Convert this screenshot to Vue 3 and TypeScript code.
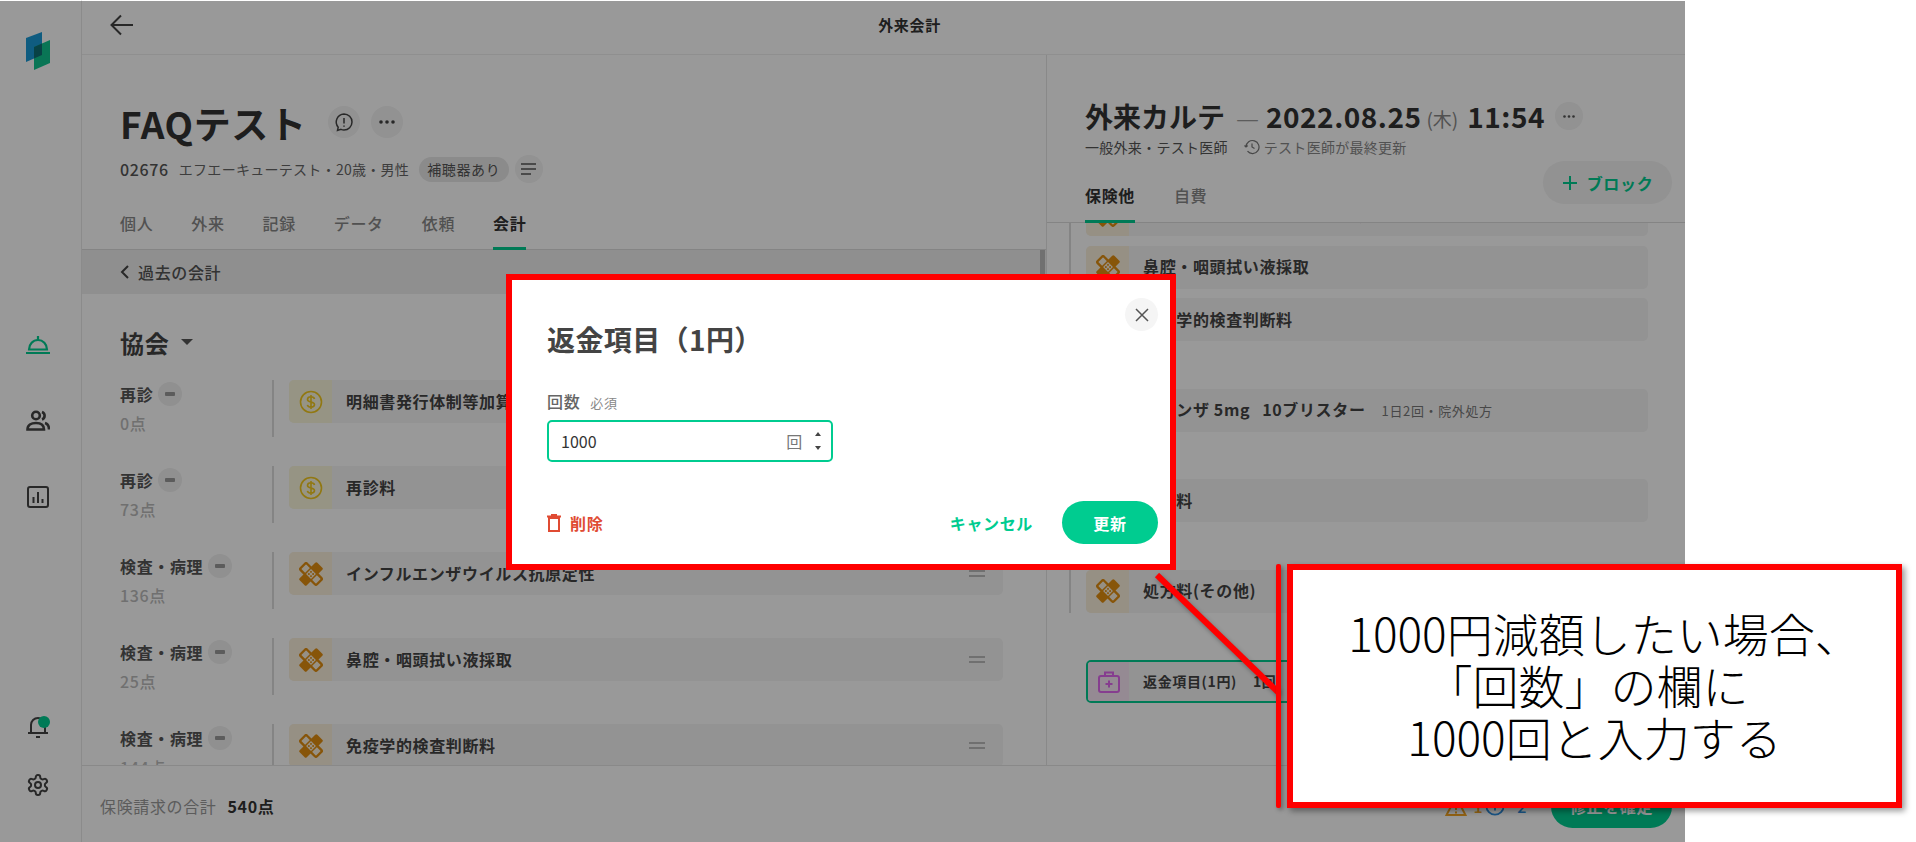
<script setup lang="ts">
type Row = { label: string; points: string; title: string; kind: "dollar" | "bandage" };
type ChartItem = { title: string; extra?: string; note?: string };

const tabs = ["個人", "外来", "記録", "データ", "依頼", "会計"];

const rows: Row[] = [
  { label: "再診", points: "0点", title: "明細書発行体制等加算", kind: "dollar" },
  { label: "再診", points: "73点", title: "再診料", kind: "dollar" },
  { label: "検査・病理", points: "136点", title: "インフルエンザウイルス抗原定性", kind: "bandage" },
  { label: "検査・病理", points: "25点", title: "鼻腔・咽頭拭い液採取", kind: "bandage" },
  { label: "検査・病理", points: "144点", title: "免疫学的検査判断料", kind: "bandage" },
];

const chartGroups: ChartItem[][] = [
  [{ title: "インフルエンザウイルス抗原定性" }, { title: "鼻腔・咽頭拭い液採取" }, { title: "免疫学的検査判断料" }],
  [{ title: "リレンザ 5mg", extra: "10ブリスター", note: "1日2回・院外処方" }],
  [{ title: "調剤料" }],
  [{ title: "処方料(その他)" }],
];
</script>

<template>
  <div class="screen">
    <div class="app">
      <aside class="sidebar">
        <svg class="logo" width="24" height="38" viewBox="0 0 24 38">
          <polygon points="0,6 16,0 16,23 0,30" fill="#1a9ad6" />
          <polygon points="8,15 24,8 24,31 8,38" fill="#10c48e" />
          <polygon points="8,15 16,11.5 16,23 8,26.5" fill="#0e6f73" />
        </svg>
        <nav class="nav">
          <svg width="24" height="24" viewBox="0 0 24 24" fill="none" stroke="#00cc90" stroke-width="2.200">
            <path d="M3 16.500a9 9.500 0 0 1 18 0z" />
            <path d="M12 3v4M0 20h24" />
          </svg>
          <svg width="24" height="24" viewBox="0 0 24 24" fill="none" stroke="#444" stroke-width="2.600">
            <circle cx="10" cy="6.500" r="3.800" />
            <path d="M1.500 20.500c0-4.500 3.500-6.500 8.500-6.500s8 2 8 6.500z" />
            <path d="M16 3a4 4 0 0 1 0 7.500M19 14c2.500.8 4 2.800 4 6.500" />
          </svg>
          <svg width="24" height="24" viewBox="0 0 24 24" fill="none" stroke="#444" stroke-width="2">
            <rect x="2" y="2" width="20" height="20" rx="2" />
            <path d="M7.500 12v6M12 7v11M16.500 14v4" />
          </svg>
        </nav>
        <div class="nav-bottom">
          <div class="bell">
            <svg width="24" height="24" viewBox="0 0 24 24" fill="none" stroke="#444" stroke-width="2">
              <path d="M5 18V10a7 7 0 0 1 14 0v8zM2 18h20M10 22h4" />
            </svg>
            <span class="bell-dot"></span>
          </div>
          <svg width="24" height="24" viewBox="0 0 24 24" fill="none" stroke="#444" stroke-width="2">
            <path d="M12.220 2h-.44a2 2 0 0 0-2 2v.18a2 2 0 0 1-1 1.730l-.43.25a2 2 0 0 1-2 0l-.15-.08a2 2 0 0 0-2.730.73l-.22.38a2 2 0 0 0 .73 2.730l.15.1a2 2 0 0 1 1 1.720v.51a2 2 0 0 1-1 1.740l-.15.09a2 2 0 0 0-.73 2.730l.22.38a2 2 0 0 0 2.730.73l.15-.08a2 2 0 0 1 2 0l.43.25a2 2 0 0 1 1 1.730V20a2 2 0 0 0 2 2h.44a2 2 0 0 0 2-2v-.18a2 2 0 0 1 1-1.730l.43-.25a2 2 0 0 1 2 0l.15.08a2 2 0 0 0 2.730-.73l.22-.39a2 2 0 0 0-.73-2.730l-.15-.08a2 2 0 0 1-1-1.740v-.5a2 2 0 0 1 1-1.740l.15-.09a2 2 0 0 0 .73-2.730l-.22-.38a2 2 0 0 0-2.730-.73l-.15.08a2 2 0 0 1-2 0l-.43-.25a2 2 0 0 1-1-1.730V4a2 2 0 0 0-2-2z" />
            <circle cx="12" cy="12" r="3" />
          </svg>
        </div>
      </aside>

      <div class="main">
        <header class="topbar">
          <svg class="back" width="24" height="24" viewBox="0 0 24 24" fill="none" stroke="#444" stroke-width="2">
            <path d="M23 12H2M11 2.500 1.500 12l9.500 9.500" />
          </svg>
          <span class="topbar-title">外来会計</span>
        </header>

        <div class="panels">
          <section class="left">
            <div class="patient">
              <div class="name-row">
                <h1>FAQテスト</h1>
                <span class="round-btn">
                  <svg width="20" height="20" viewBox="0 0 20 20" fill="none" stroke="#444" stroke-width="1.500">
                    <path d="M10 2a8 8 0 0 1 0 16c-1 0-2-.2-3-.6L3.500 18.500l.7-3.300A8 8 0 0 1 10 2zM10 6v5.500M10 13.500v1.200" />
                  </svg>
                </span>
                <span class="round-btn">
                  <svg width="16" height="4" viewBox="0 0 16 4" fill="#444">
                    <circle cx="2" cy="2" r="1.800" /><circle cx="8" cy="2" r="1.800" /><circle cx="14" cy="2" r="1.800" />
                  </svg>
                </span>
              </div>
              <div class="info-row">
                <b class="pid">02676</b>
                <span class="kana">エフエーキューテスト・20歳・男性</span>
                <span class="pill">補聴器あり</span>
                <span class="menu-btn">
                  <svg width="16" height="12" viewBox="0 0 16 12" fill="none" stroke="#555" stroke-width="1.500">
                    <path d="M0 1h15M0 6h15M0 11h10" />
                  </svg>
                </span>
              </div>
              <div class="tabs">
                <span v-for="tab in tabs" :key="tab" class="tab" :class="{ active: tab === '会計' }">{{ tab }}</span>
              </div>
            </div>

            <div class="past-bar">
              <svg width="10" height="14" viewBox="0 0 10 14" fill="none" stroke="#444" stroke-width="2">
                <path d="M8 1 2 7l6 6" />
              </svg>
              <span>過去の会計</span>
            </div>

            <div class="insurer">
              <span>協会</span>
              <i class="caret"></i>
            </div>

            <div class="rows">
              <div v-for="(row, i) in rows" :key="i" class="row">
                <div class="row-label">
                  <div class="row-name">
                    <b>{{ row.label }}</b>
                    <span class="minus"><i></i></span>
                  </div>
                  <div class="row-points">{{ row.points }}</div>
                </div>
                <div class="card">
                  <div class="card-icon" :class="row.kind">
                    <svg v-if="row.kind === 'dollar'" width="24" height="24" viewBox="0 0 24 24" fill="none" stroke="#f2c81e" stroke-width="1.600">
                      <circle cx="12" cy="12" r="10.500" />
                      <path d="M15.500 9c-.3-1.500-1.700-2.200-3.500-2.200-2 0-3.500 1-3.500 2.600 0 3.600 7 1.600 7 5.200 0 1.600-1.500 2.600-3.500 2.600-1.900 0-3.300-.8-3.600-2.300M12 5v14" />
                    </svg>
                    <svg v-else width="24" height="24" viewBox="0 0 24 24">
                      <g transform="rotate(45 12 12)">
                        <rect x="0.500" y="7.500" width="23" height="9" rx="1.500" fill="#faf0dc" stroke="#e28e10" stroke-width="2.400" />
                        <rect x="7" y="-0.500" width="10" height="25" rx="1.500" fill="#e28e10" />
                        <rect x="8.500" y="8.500" width="7" height="7" fill="#faf0dc" />
                        <circle cx="10.500" cy="10.500" r="1" fill="#e28e10" /><circle cx="13.500" cy="10.500" r="1" fill="#e28e10" />
                        <circle cx="10.500" cy="13.500" r="1" fill="#e28e10" /><circle cx="13.500" cy="13.500" r="1" fill="#e28e10" />
                      </g>
                    </svg>
                  </div>
                  <span class="card-title">{{ row.title }}</span>
                  <span class="handle"></span>
                </div>
              </div>
            </div>

            <span class="scroll-thumb"></span>
          </section>

          <section class="right">
            <div class="chart-head">
              <div class="chart-title">
                <b>外来カルテ</b>
                <span class="dash">—</span>
                <b class="num">2022.08.25</b>
                <span class="weekday">(木)</span>
                <b class="num">11:54</b>
                <span class="small-dots">
                  <svg width="12" height="3" viewBox="0 0 12 3" fill="#555">
                    <circle cx="1.500" cy="1.500" r="1.300" /><circle cx="6" cy="1.500" r="1.300" /><circle cx="10.500" cy="1.500" r="1.300" />
                  </svg>
                </span>
              </div>
              <div class="chart-sub">
                <span class="sub-strong">一般外来・テスト医師</span>
                <svg width="16" height="16" viewBox="0 0 16 16" fill="none" stroke="#777" stroke-width="1.200">
                  <path d="M2 8a6.500 6.500 0 1 1 1.500 4.200M.5 6.500 2 8l1.800-1.400M8 4.500V8l2.500 1.500" />
                </svg>
                <span>テスト医師が最終更新</span>
              </div>
              <div class="chart-tabs">
                <span class="chart-tab active">保険他</span>
                <span class="chart-tab">自費</span>
              </div>
              <span class="block-btn">
                <svg width="16" height="16" viewBox="0 0 16 16" fill="none" stroke="#00cc90" stroke-width="2">
                  <path d="M8 1v14M1 8h14" />
                </svg>
                ブロック
              </span>
            </div>

            <div class="chart-list">
              <div v-for="(group, g) in chartGroups" :key="g" class="chart-group">
                <div v-for="item in group" :key="item.title" class="card">
                  <div class="card-icon bandage">
                    <svg width="24" height="24" viewBox="0 0 24 24">
                      <g transform="rotate(45 12 12)">
                        <rect x="0.500" y="7.500" width="23" height="9" rx="1.500" fill="#faf0dc" stroke="#e28e10" stroke-width="2.400" />
                        <rect x="7" y="-0.500" width="10" height="25" rx="1.500" fill="#e28e10" />
                        <rect x="8.500" y="8.500" width="7" height="7" fill="#faf0dc" />
                        <circle cx="10.500" cy="10.500" r="1" fill="#e28e10" /><circle cx="13.500" cy="10.500" r="1" fill="#e28e10" />
                        <circle cx="10.500" cy="13.500" r="1" fill="#e28e10" /><circle cx="13.500" cy="13.500" r="1" fill="#e28e10" />
                      </g>
                    </svg>
                  </div>
                  <span class="card-title">{{ item.title }}</span>
                  <span v-if="item.extra" class="card-title">{{ item.extra }}</span>
                  <span v-if="item.note" class="card-note">{{ item.note }}</span>
                </div>
              </div>
              <div class="chart-group plain">
                <div class="card refund">
                  <div class="card-icon pink">
                    <svg width="22" height="22" viewBox="0 0 22 22" fill="none" stroke="#e066ee" stroke-width="2">
                      <rect x="1" y="5" width="20" height="16" rx="2" />
                      <path d="M7 5V1.500h8V5M11 9.500v7M7.500 13h7" />
                    </svg>
                  </div>
                  <span class="card-title refund-title">返金項目(1円)</span>
                  <span class="card-title refund-title">1回</span>
                </div>
              </div>
            </div>
          </section>
        </div>

        <footer class="footer">
          <span class="total-label">保険請求の合計</span>
          <b class="total-value">540点</b>
          <div class="footer-right">
            <svg width="22" height="22" viewBox="0 0 22 22" fill="none" stroke="#f5a623" stroke-width="2">
              <path d="M11 2 1.500 20h19zM11 8v7M11 16.500v2" />
            </svg>
            <span class="warn-count">1</span>
            <svg width="20" height="20" viewBox="0 0 22 22" fill="none" stroke="#2d8fe0" stroke-width="2">
              <circle cx="11" cy="11" r="9.500" />
              <path d="M11 10v6M11 6v2" />
            </svg>
            <span class="info-count">2</span>
            <span class="confirm-btn">修正を確定</span>
          </div>
        </footer>
      </div>

      <div class="scrim"></div>
    </div>

    <div class="modal">
      <button class="close">
        <svg width="14" height="14" viewBox="0 0 14 14" fill="none" stroke="#555" stroke-width="1.500">
          <path d="M1 1l12 12M13 1 1 13" />
        </svg>
      </button>
      <h2>返金項目（1円）</h2>
      <div class="field-label"><b>回数</b><span>必須</span></div>
      <div class="field">
        <input value="1000" />
        <span class="unit">回</span>
        <span class="stepper"><i class="up"></i><i class="down"></i></span>
      </div>
      <div class="actions">
        <span class="delete">
          <svg width="14" height="18" viewBox="0 0 14 18" fill="none" stroke="#e04b33" stroke-width="2">
            <path d="M2 4h10v13H2zM0 2.500h14M4 1h6" />
          </svg>
          削除
        </span>
        <span class="cancel">キャンセル</span>
        <span class="update">更新</span>
      </div>
    </div>

    <svg class="arrow" width="140" height="130" viewBox="0 0 140 130">
      <path d="M3 3 125 121" stroke="#ff0000" stroke-width="6" fill="none" />
    </svg>
    <span class="callout-line"></span>
    <div class="callout">
      <p class="line-a">1000円減額したい場合、</p>
      <p class="line-b">「回数」の欄に</p>
      <p>1000回と入力する</p>
    </div>
  </div>
</template>

<style>
html,
body {
  margin: 0;
  background: #fff;
}
</style>

<style scoped>
.screen {
  position: relative;
  width: 1916px;
  height: 842px;
  overflow: hidden;
  background: #fff;
  font-family: "Noto Sans CJK JP", "Noto Sans", sans-serif;
  color: #333;
  letter-spacing: 0.04em;
}

.app {
  position: relative;
  display: flex;
  width: 1685px;
  height: 842px;
  background: #fff;
}

.scrim {
  position: absolute;
  z-index: 5;
  inset: 1px 0 0 0;
  background: rgba(0, 0, 0, 0.4);
}

.sidebar {
  display: flex;
  flex-direction: column;
  align-items: center;
  box-sizing: border-box;
  width: 82px;
  height: 842px;
  padding: 32px 5px 45px 0;
  border-right: 1px solid #e8e8e8;
}

.logo {
  flex: none;
}

.nav {
  display: flex;
  flex-direction: column;
  gap: 52px;
  margin-top: 263px;
}

.nav-bottom {
  display: flex;
  flex-direction: column;
  gap: 34px;
  margin-top: auto;
}

.nav svg,
.nav-bottom svg {
  display: block;
}

.bell {
  position: relative;
}

.bell-dot {
  position: absolute;
  top: 1px;
  right: 0;
  width: 12px;
  height: 12px;
  border-radius: 50%;
  background: #00cc90;
}

.main {
  display: flex;
  flex-direction: column;
  flex: 1;
  min-width: 0;
}

.topbar {
  position: relative;
  display: flex;
  align-items: center;
  justify-content: center;
  flex: none;
  height: 55px;
  border-bottom: 1px solid #eee;
  box-sizing: border-box;
}

.back {
  position: absolute;
  left: 28px;
  top: 13px;
}

.topbar-title {
  font-size: 15px;
  font-weight: 700;
  margin-left: 52px;
  margin-bottom: 5px;
}

.panels {
  display: flex;
  flex: 1;
  min-height: 0;
}

.left {
  position: relative;
  width: 965px;
  flex: none;
  overflow: hidden;
  border-right: 1px solid #e4e4e4;
  box-sizing: border-box;
}

.patient {
  padding: 48px 0 0 38px;
  border-bottom: 1px solid #ddd;
}

.name-row {
  display: flex;
  align-items: center;
  height: 40px;
}

h1 {
  margin: 0 21px 0 0;
  font-size: 37px;
  line-height: 40px;
  font-weight: 700;
}

.round-btn {
  display: flex;
  align-items: center;
  justify-content: center;
  width: 32px;
  height: 32px;
  margin-right: 11px;
  border-radius: 50%;
  background: #f3f3f3;
  margin-top: -2px;
}

.info-row {
  display: flex;
  align-items: center;
  height: 26px;
  margin-top: 13px;
}

.pid {
  font-size: 16px;
  font-weight: 500;
  color: #555;
  margin-right: 10px;
}

.kana {
  font-size: 14px;
  color: #666;
  width: 240px;
  letter-spacing: 0.02em;
}

.pill {
  display: inline-flex;
  align-items: center;
  justify-content: center;
  width: 90px;
  height: 25px;
  border-radius: 13px;
  background: #e8e8e8;
  font-size: 14px;
  color: #555;
}

.menu-btn {
  display: flex;
  align-items: center;
  justify-content: center;
  width: 28px;
  height: 28px;
  margin-left: 6px;
  border-radius: 50%;
  background: #f3f3f3;
}

.tabs {
  display: flex;
  gap: 38px;
  height: 38px;
  padding-top: 29px;
}

.tab {
  position: relative;
  height: 24px;
  font-size: 16px;
  line-height: 24px;
  font-weight: 500;
  color: #888;
}

.tab.active {
  color: #333;
  font-weight: 700;
}

.tab.active::after {
  content: "";
  position: absolute;
  left: 0;
  right: 0;
  top: 36px;
  height: 3px;
  background: #00cc90;
}

.past-bar {
  display: flex;
  align-items: center;
  gap: 8px;
  height: 44px;
  padding-left: 38px;
  background: #eee;
  font-size: 16px;
  font-weight: 500;
  color: #555;
}

.insurer {
  display: flex;
  align-items: center;
  gap: 12px;
  height: 34px;
  margin: 31px 0 21px 38px;
  font-size: 24px;
  font-weight: 700;
  color: #444;
}

.caret {
  width: 0;
  height: 0;
  border-left: 6px solid transparent;
  border-right: 6px solid transparent;
  border-top: 6px solid #555;
}

.rows {
  display: flex;
  flex-direction: column;
  gap: 29px;
  padding-left: 38px;
}

.row {
  display: flex;
  flex: none;
  height: 57px;
}

.row-label {
  box-sizing: border-box;
  width: 154px;
  border-right: 2px solid #ddd;
  flex: none;
}

.row-name {
  display: flex;
  align-items: center;
  gap: 5px;
  height: 28px;
  font-size: 16px;
  color: #555;
}

.row-name b {
  font-weight: 700;
}

.minus {
  display: flex;
  align-items: center;
  justify-content: center;
  width: 24px;
  height: 24px;
  border-radius: 50%;
  background: #f0f0f0;
}

.minus i {
  width: 10px;
  height: 4px;
  border-radius: 1px;
  background: #999;
}

.row-points {
  margin-top: 3px;
  font-size: 16px;
  line-height: 24px;
  color: #bbb;
  font-weight: 500;
}

.card {
  display: flex;
  align-items: center;
  position: relative;
  box-sizing: border-box;
  width: 714px;
  height: 43px;
  margin-left: 15px;
  border-radius: 5px;
  background: #f5f5f5;
  overflow: hidden;
  flex: none;
}

.card-icon {
  display: flex;
  align-items: center;
  justify-content: center;
  flex: none;
  width: 43px;
  height: 100%;
  margin-right: 14px;
}

.card-icon.dollar {
  background: #fbf7dc;
}

.card-icon.bandage {
  background: #faf0dc;
}

.card-icon.pink {
  background: #f8e6f6;
}

.card-title {
  font-size: 16px;
  font-weight: 700;
  color: #444;
  white-space: nowrap;
  margin-right: 12px;
  margin-top: -2px;
}

.card-note {
  font-size: 13px;
  color: #777;
  margin-left: 4px;
}

.handle {
  position: absolute;
  right: 18px;
  top: 18px;
  width: 16px;
  height: 7px;
  border-top: 2px solid #bbb;
  border-bottom: 2px solid #bbb;
  box-sizing: border-box;
}

.scroll-thumb {
  position: absolute;
  right: 1px;
  top: 195px;
  width: 5px;
  height: 40px;
  background: #bbb;
}

.right {
  position: relative;
  flex: 1;
  min-width: 0;
  display: flex;
  flex-direction: column;
  overflow: hidden;
}

.chart-head {
  flex: none;
  box-sizing: border-box;
  height: 168px;
  padding: 44px 0 0 38px;
  border-bottom: 1px solid #ddd;
  position: relative;
  z-index: 1;
  background: #fff;
}

.chart-title {
  display: flex;
  align-items: center;
  height: 34px;
  font-size: 28px;
  color: #333;
  white-space: nowrap;
  letter-spacing: 0;
}

.chart-title b {
  font-weight: 700;
}

.chart-title .num {
  letter-spacing: 0.5px;
}

.dash {
  margin: 0 7px 0 11px;
  font-size: 26px;
  font-weight: 300;
  color: #999;
}

.weekday {
  margin: 4px 9px 0 5px;
  font-size: 19px;
  color: #888;
}

.small-dots {
  display: flex;
  align-items: center;
  justify-content: center;
  width: 28px;
  height: 28px;
  margin-left: 10px;
  border-radius: 50%;
  background: #f3f3f3;
}

.chart-sub {
  display: flex;
  align-items: center;
  gap: 4px;
  height: 20px;
  margin-top: 4px;
  font-size: 14px;
  color: #888;
  letter-spacing: 0.02em;
}

.sub-strong {
  color: #555;
  margin-right: 12px;
}

.chart-tabs {
  display: flex;
  gap: 39px;
  margin-top: 26px;
}

.chart-tab {
  position: relative;
  height: 24px;
  font-size: 16px;
  line-height: 24px;
  font-weight: 500;
  color: #888;
}

.chart-tab.active {
  color: #333;
  font-weight: 700;
}

.chart-tab.active::after {
  content: "";
  position: absolute;
  left: 0;
  right: 0;
  top: 37px;
  height: 3px;
  background: #00cc90;
}

.block-btn {
  position: absolute;
  top: 106px;
  right: 13px;
  display: flex;
  align-items: center;
  justify-content: center;
  gap: 9px;
  width: 129px;
  height: 43px;
  border-radius: 22px;
  background: #f3f3f3;
  font-size: 16px;
  font-weight: 700;
  color: #00cc90;
}

.chart-list {
  display: flex;
  flex-direction: column;
  gap: 47.5px;
  margin-top: -30px;
}

.chart-group {
  display: flex;
  flex-direction: column;
  gap: 9.5px;
  width: 579px;
  margin-left: 22px;
  padding-left: 15px;
  border-left: 2px solid #ddd;
  box-sizing: border-box;
}

.chart-group .card {
  width: 562px;
  margin-left: 0;
}

.chart-group.plain {
  border-left-color: transparent;
}

.refund {
  border: 2px solid #00cc90;
}

.refund .card-icon {
  width: 41px;
}

.refund-title {
  font-size: 14px;
  margin-right: 16px;
}

.footer {
  display: flex;
  align-items: center;
  flex: none;
  box-sizing: border-box;
  height: 77px;
  padding: 4px 13px 0 18px;
  border-top: 1px solid #e4e4e4;
}

.total-label {
  font-size: 16px;
  color: #999;
}

.total-value {
  margin-left: 11px;
  font-size: 16px;
  font-weight: 700;
}

.footer-right {
  display: flex;
  align-items: center;
  margin-left: auto;
}

.warn-count,
.info-count {
  font-size: 16px;
  font-weight: 500;
}

.warn-count {
  margin: 0 2px 0 6px;
  color: #f5a623;
}

.info-count {
  margin: 0 24px 0 12px;
  color: #2d8fe0;
}

.confirm-btn {
  display: flex;
  align-items: center;
  justify-content: center;
  width: 121px;
  height: 43px;
  border-radius: 22px;
  background: #00cc90;
  color: #fff;
  font-size: 16px;
  font-weight: 700;
}

.modal {
  position: absolute;
  z-index: 6;
  left: 506px;
  top: 274px;
  box-sizing: border-box;
  width: 670px;
  height: 296px;
  padding: 43px 12px 0 35px;
  border: 6px solid #ff0000;
  background: #fff;
}

.close {
  position: absolute;
  right: 12px;
  top: 18px;
  display: flex;
  align-items: center;
  justify-content: center;
  width: 33px;
  height: 33px;
  padding: 0;
  border: 0;
  border-radius: 50%;
  background: #f5f5f5;
}

h2 {
  margin: 0;
  font-size: 28px;
  line-height: 32px;
  font-weight: 700;
  color: #444;
  letter-spacing: 0.4px;
}

.field-label {
  display: flex;
  align-items: center;
  gap: 10px;
  height: 20px;
  margin-top: 37px;
  font-size: 16px;
  color: #666;
}

.field-label b {
  font-weight: 500;
  margin-top: -2px;
}

.field-label span {
  font-size: 13px;
  color: #888;
}

.field {
  display: flex;
  align-items: center;
  box-sizing: border-box;
  width: 286px;
  height: 42px;
  margin-top: 8px;
  padding: 0 8px 0 12px;
  border: 2px solid #00cc90;
  border-radius: 5px;
}

.field input {
  flex: 1;
  min-width: 0;
  border: 0;
  padding: 0;
  outline: none;
  font: 16px "Noto Sans CJK JP", sans-serif;
  color: #333;
}

.unit {
  font-size: 16px;
  color: #777;
  margin-right: 12px;
}

.stepper {
  display: flex;
  flex-direction: column;
  gap: 10px;
  margin-right: 2px;
}

.stepper i {
  width: 0;
  height: 0;
  border-left: 3px solid transparent;
  border-right: 3px solid transparent;
}

.stepper .up {
  border-bottom: 4px solid #444;
}

.stepper .down {
  border-top: 4px solid #444;
}

.actions {
  display: flex;
  align-items: center;
  margin-top: 39px;
  font-size: 16px;
  font-weight: 700;
}

.delete {
  display: flex;
  align-items: center;
  gap: 9px;
  color: #e04b33;
}

.cancel {
  margin-left: auto;
  margin-right: 29px;
  color: #00cc90;
}

.update {
  display: flex;
  align-items: center;
  justify-content: center;
  width: 96px;
  height: 43px;
  border-radius: 22px;
  background: #00cc90;
  color: #fff;
}

.arrow {
  position: absolute;
  z-index: 6;
  left: 1154px;
  top: 572px;
  filter: drop-shadow(1px 2px 2px rgba(0, 0, 0, 0.3));
}

.callout-line {
  position: absolute;
  z-index: 6;
  left: 1276px;
  top: 564px;
  width: 5px;
  height: 244px;
  border-radius: 2px;
  background: #ff0000;
  box-shadow: 2px 2px 4px rgba(0, 0, 0, 0.35);
}

.callout {
  position: absolute;
  z-index: 6;
  left: 1287px;
  top: 564px;
  display: flex;
  flex-direction: column;
  align-items: center;
  justify-content: center;
  box-sizing: border-box;
  width: 615px;
  height: 244px;
  padding-bottom: 4px;
  border: 6px solid #ff0000;
  background: #fff;
  box-shadow: 3px 3px 6px rgba(0, 0, 0, 0.4);
  color: #000;
  font-size: 46px;
  font-weight: 300;
  line-height: 52px;
  letter-spacing: 0;
}

.callout p {
  margin: 0;
  white-space: nowrap;
}

.line-a {
  padding-left: 20px;
}

.line-b {
  padding-right: 14px;
}
</style>
